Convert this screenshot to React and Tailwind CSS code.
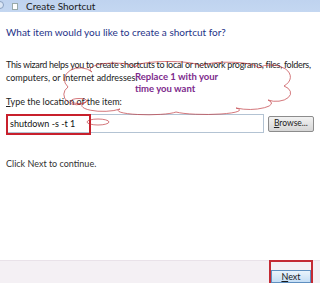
import React from 'react'

const FONT = { fontFamily: 'Lato, "Noto Sans", sans-serif' }

function Cloud() {
  return (
    <svg className="absolute left-0 top-0 pointer-events-none" width="320" height="283" viewBox="0 0 320 283">
      <g fill="none" stroke="#c0393f" strokeWidth="0.8" opacity="0.85">
        <path d="M68 87 A12 9 0 0 1 92 72 A22 6 0 0 1 136 67 A32 5 0 0 1 200 66 A30 6 0 0 1 258 68 A16 10 0 0 1 284 86 A14 8 0 0 1 268 100 A22 6 0 0 1 236 108 A30 4 0 0 1 176 112 A28 4 0 0 1 120 109 A18 5 0 0 1 86 102 A9 7 0 0 1 68 87 Z" />
        <ellipse cx="79" cy="101" rx="8" ry="2.5" />
        <ellipse cx="98" cy="122" rx="11" ry="3" />
      </g>
    </svg>
  )
}

export default function App() {
  return (
    <div className="relative w-[320px] h-[283px] overflow-hidden bg-white flex flex-col" style={FONT}>
      {/* title bar */}
      <div className="h-[12px] bg-gradient-to-b from-[#bfd3ef] to-[#c4d7f1] flex items-end gap-[6px] overflow-hidden">
        <div className="w-[8px] h-[8px] rounded-full border border-[#8aa0c0] bg-[#dbe6f5] -ml-[4px] mb-[3px]" />
        <div className="w-[6px] h-[7px] bg-white border border-[#9aa] ml-[2px] mb-[2px]" />
        <span className="text-[10px] leading-[10px] text-[#1b1b1b] ml-[2px] mb-[1px]">Create Shortcut</span>
      </div>

      {/* body */}
      <div className="flex-1 px-[6px] flex flex-col">
        <h1 className="text-[10px] leading-[16px] text-[#1e3287] mt-[12px] whitespace-nowrap">
          What item would you like to create a shortcut for?
        </h1>
        <p className="text-[9px] leading-[13px] text-[#222] mt-[18px] whitespace-nowrap">
          <span className="tracking-[-0.3px]">This wizard helps you to create shortcuts to local or network programs, files, folders,</span>
          <br />
          computers, or Internet addresses.
        </p>
        <div className="text-[9px] leading-[12px] text-[#222] mt-[12px]">
          <span className="underline">T</span>ype the location of the item:
        </div>
        <div className="flex items-center gap-[4px] mt-[6px]">
          <div className="relative w-[262px] h-[19px] border border-[#b3c3d3] bg-white">
            <div className="absolute -left-[1px] -top-[1px] w-[85px] h-[21px] border-2 border-[#c8202c]" />
            <span className="absolute left-[3px] top-[3px] text-[9px] leading-[12px] text-[#111]">shutdown -s -t 1</span>
          </div>
          <button className="w-[47px] h-[16px] rounded-[2px] border border-[#8c8c8c] bg-gradient-to-b from-[#f2f2f2] to-[#d6d6d6] text-[8.5px] leading-none text-[#222]">
            <span className="underline">B</span>rowse...
          </button>
        </div>
        <div className="text-[9px] leading-[12px] text-[#333] mt-[25px]">Click Next to continue.</div>
      </div>

      {/* footer */}
      <div className="h-[23px] border-t border-[#e9e2e9] bg-[#f4f0f4] flex items-center justify-end pr-[7px]">
        <div className="border-2 border-[#c42a33] mt-[4px]">
          <button className="w-[40px] h-[13px] border border-[#5f8fc0] bg-gradient-to-b from-[#eaf4fc] to-[#c5def5] text-[9px] leading-none text-[#1a1a1a]">
            <span className="underline">N</span>ext
          </button>
        </div>
      </div>

      {/* annotation over the dialog */}
      <div className="absolute left-[135px] top-[71px] text-[9.5px] leading-[12px] font-bold text-[#7d2a8c] whitespace-nowrap">
        Replace 1 with your
        <br />
        time you want
      </div>
      <Cloud />
    </div>
  )
}
